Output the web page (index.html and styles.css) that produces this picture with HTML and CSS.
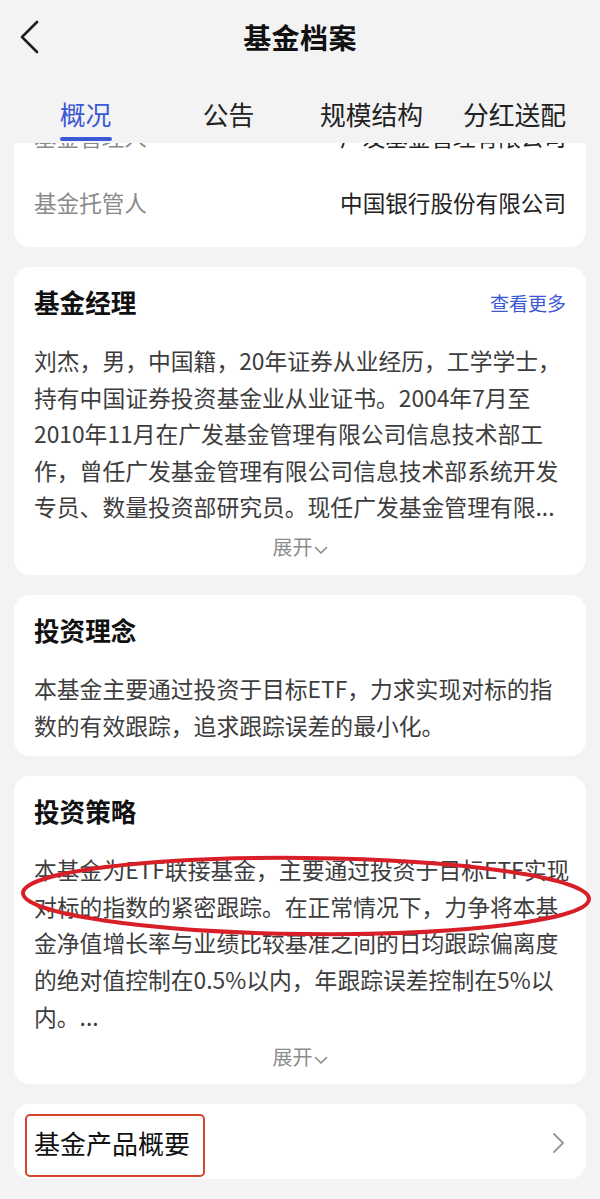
FILE: index.html
```html
<!DOCTYPE html>
<html lang="zh-CN">
<head>
<meta charset="utf-8">
<title>基金档案</title>
<link rel="stylesheet" href="styles.css">
</head>
<body>
<div class="page">
  <header class="topbar">
    <span class="back">
      <svg width="20" height="34" viewBox="0 0 20 34"><polyline points="17,2 2,17 17,32" fill="none" stroke="#1e1e1e" stroke-width="2.6" stroke-linecap="round" stroke-linejoin="round"/></svg>
    </span>
    <h1 class="title">基金档案</h1>
  </header>

  <nav class="tabs">
    <div class="tab active"><span class="tab-text">概况</span><span class="tab-line"></span></div>
    <div class="tab"><span class="tab-text">公告</span><span class="tab-line"></span></div>
    <div class="tab"><span class="tab-text">规模结构</span><span class="tab-line"></span></div>
    <div class="tab"><span class="tab-text">分红送配</span><span class="tab-line"></span></div>
  </nav>

  <main class="scroll">
    <section class="card info-card">
      <div class="row"><span class="label">基金管理人</span><span class="value">广发基金管理有限公司</span></div>
      <div class="row"><span class="label">基金托管人</span><span class="value">中国银行股份有限公司</span></div>
    </section>

    <section class="card">
      <div class="card-head">
        <h2 class="card-title">基金经理</h2>
        <span class="more">查看更多</span>
      </div>
      <p class="body">刘杰，男，中国籍，20年证券从业经历，工学学士，<br>持有中国证券投资基金业从业证书。2004年7月至<br>2010年11月在广发基金管理有限公司信息技术部工<br>作，曾任广发基金管理有限公司信息技术部系统开发<br>专员、数量投资部研究员。现任广发基金管理有限...</p>
      <div class="expand">展开<svg class="expand-icon" width="14" height="9" viewBox="0 0 14 9"><polyline points="1.5,1.5 7,7 12.5,1.5" fill="none" stroke="#8c8c8c" stroke-width="1.6" stroke-linecap="round" stroke-linejoin="round"/></svg></div>
    </section>

    <section class="card">
      <div class="card-head">
        <h2 class="card-title">投资理念</h2>
      </div>
      <p class="body">本基金主要通过投资于目标ETF，力求实现对标的指<br>数的有效跟踪，追求跟踪误差的最小化。</p>
    </section>

    <section class="card">
      <div class="card-head">
        <h2 class="card-title">投资策略</h2>
      </div>
      <p class="body">本基金为ETF联接基金，主要通过投资于目标ETF实现<br>对标的指数的紧密跟踪。在正常情况下，力争将本基<br>金净值增长率与业绩比较基准之间的日均跟踪偏离度<br>的绝对值控制在0.5%以内，年跟踪误差控制在5%以<br>内。...</p>
      <div class="expand">展开<svg class="expand-icon" width="14" height="9" viewBox="0 0 14 9"><polyline points="1.5,1.5 7,7 12.5,1.5" fill="none" stroke="#8c8c8c" stroke-width="1.6" stroke-linecap="round" stroke-linejoin="round"/></svg></div>
    </section>

    <section class="card link-card">
      <span class="link-title">基金产品概要</span>
      <svg class="link-arrow" width="14" height="22" viewBox="0 0 14 22"><polyline points="2,2 11,11 2,20" fill="none" stroke="#9a9a9a" stroke-width="2" stroke-linecap="round" stroke-linejoin="round"/></svg>
    </section>
  </main>

  <svg class="mark-ellipse" width="600" height="1199" viewBox="0 0 600 1199">
    <ellipse cx="306" cy="896" rx="283" ry="38" fill="none" stroke="#d81e27" stroke-width="4" transform="rotate(0.6 306 896)"/>
  </svg>
</div>
</body>
</html>
```

FILE: styles.css
```css
* { box-sizing: border-box; }

html, body {
  margin: 0;
  padding: 0;
  background: #f3f3f3;
}

body {
  font-family: "Noto Sans CJK SC", "Noto Sans", sans-serif;
  color: #333;
}

.page {
  position: relative;
  width: 600px;
  height: 1199px;
  display: flex;
  flex-direction: column;
  overflow: hidden;
  background: #f3f3f3;
}

.topbar {
  height: 74px;
  flex: none;
  display: grid;
  grid-template-columns: 1fr auto 1fr;
  align-items: center;
}

.back {
  display: flex;
  align-items: center;
  padding-left: 20px;
}

.title {
  margin: 0;
  font-size: 28px;
  line-height: 40px;
  font-weight: 700;
  color: #111;
  letter-spacing: 0.4px;
}

.tabs {
  flex: none;
  height: 69px;
  display: grid;
  grid-template-columns: repeat(4, 1fr);
  padding: 0 14px;
  position: relative;
  z-index: 1;
  background: #f3f3f3;
}

.tab {
  display: flex;
  flex-direction: column;
  align-items: center;
  padding-top: 25px;
}

.tab-text {
  font-size: 25.8px;
  line-height: 30px;
  color: #222;
}

.tab-line {
  margin-top: 8px;
  width: 52px;
  height: 4px;
  border-radius: 2px;
  background: transparent;
}

.tab.active .tab-text { color: #3c58d6; }
.tab.active .tab-line { background: #3c58d6; }

.scroll {
  flex: 1;
  overflow: hidden;
  padding: 0 14px;
  display: flex;
  flex-direction: column;
  gap: 20px;
}

.card {
  background: #fff;
  border-radius: 16px;
  padding: 17px 20px 12px;
  flex: none;
}

.info-card {
  margin-top: -40px;
  padding: 0 20px 12px;
  border-radius: 0 0 16px 16px;
}

.row {
  height: 66px;
  display: flex;
  align-items: center;
  justify-content: space-between;
  font-size: 22.6px;
}

.label { color: #8a8a8a; }
.value { color: #222; }

.card-head {
  display: flex;
  align-items: center;
  justify-content: space-between;
  height: 36px;
}

.card-title {
  margin: 0;
  font-size: 25.6px;
  line-height: 36px;
  font-weight: 700;
  color: #111;
}

.more {
  font-size: 19px;
  color: #3c58d6;
}

.body {
  margin: 23px 0 0;
  font-size: 22.8px;
  line-height: 36.6px;
  color: #3d3d3d;
  white-space: nowrap;
}

.expand {
  margin-top: 5px;
  height: 32px;
  display: flex;
  align-items: center;
  justify-content: center;
  font-size: 20px;
  color: #8c8c8c;
}

.expand-icon {
  margin-left: 1px;
  margin-top: 8px;
}

.link-card {
  height: 75px;
  padding: 0 20px;
  display: flex;
  align-items: center;
  justify-content: space-between;
}

.link-title {
  position: relative;
  font-size: 26px;
  line-height: 36px;
  color: #111;
  margin-top: 2px;
}

.link-title::after {
  content: "";
  position: absolute;
  left: -9px;
  right: -15px;
  top: -11px;
  bottom: -16px;
  border: 2.5px solid #d6452f;
  border-radius: 5px;
}

.link-arrow {
  margin-top: 2px;
}

.mark-ellipse {
  position: absolute;
  left: 0;
  top: 0;
  pointer-events: none;
  z-index: 2;
}
```
